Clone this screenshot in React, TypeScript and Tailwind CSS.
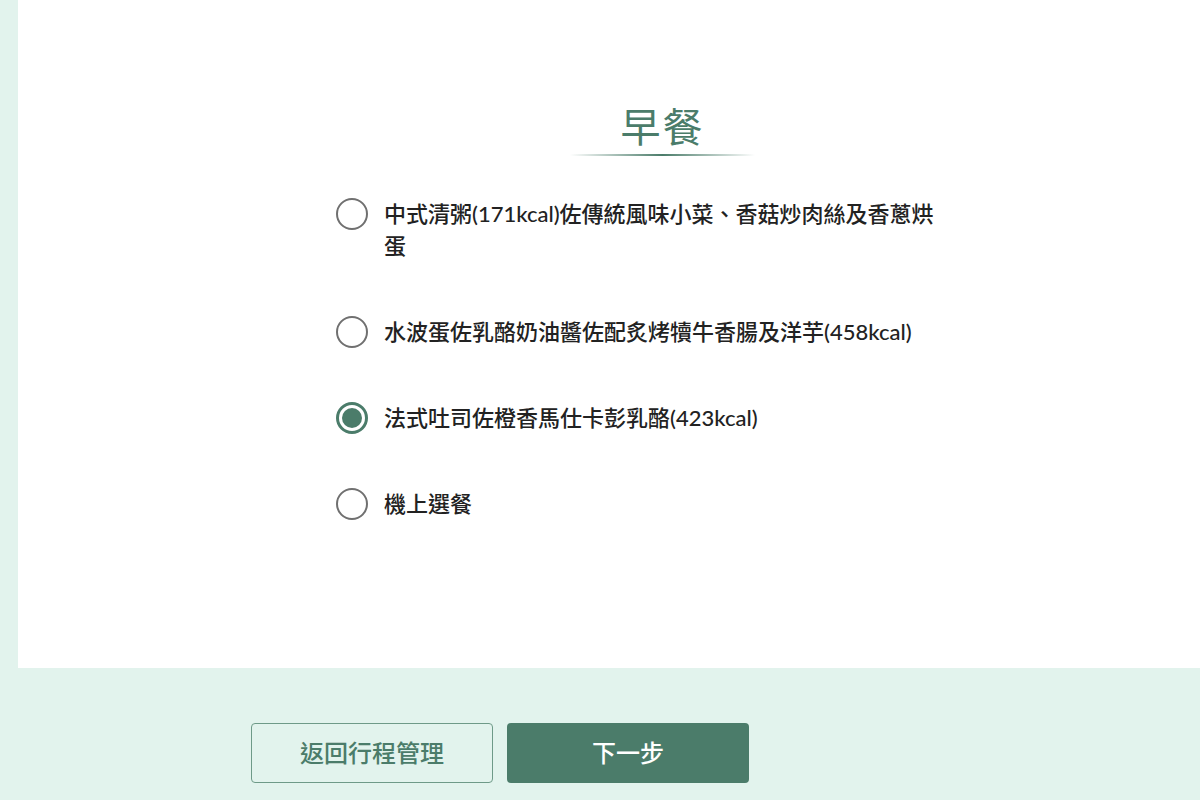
import React, { useState } from "react";

const options = [
  "中式清粥(171kcal)佐傳統風味小菜、香菇炒肉絲及香蔥烘蛋",
  "水波蛋佐乳酪奶油醬佐配炙烤犢牛香腸及洋芋(458kcal)",
  "法式吐司佐橙香馬仕卡彭乳酪(423kcal)",
  "機上選餐",
];

export default function App() {
  const [sel, setSel] = useState(2);
  return (
    <div
      className="w-[1200px] h-[800px] overflow-hidden bg-[#e2f3ed] flex flex-col"
      style={{ fontFamily: '"Noto Sans", "Noto Sans CJK TC", sans-serif' }}
    >
      <div className="ml-[18px] h-[668px] bg-white flex flex-col pt-[99px]">
        <div className="ml-[552px] w-[185px] flex flex-col items-center">
          <div className="text-[40px] leading-[56px] text-[#4b7c6a] tracking-[2px] font-normal">早餐</div>
          <div className="mt-[-1px] w-[185px] h-[2px] bg-gradient-to-r from-transparent via-[#4b7c6a] to-transparent" />
        </div>
        <div className="ml-[318px] mt-[42px] flex flex-col gap-[54px]">
          {options.map((o, i) => (
            <label
              key={i}
              className="flex items-start gap-[16px] cursor-pointer"
              onClick={() => setSel(i)}
            >
              {sel === i ? (
                <span className="w-[32px] h-[32px] shrink-0 rounded-full border-[3px] border-[#4b7c6a] flex items-center justify-center">
                  <span className="w-[20px] h-[20px] rounded-full bg-[#4b7c6a]" />
                </span>
              ) : (
                <span className="w-[32px] h-[32px] shrink-0 rounded-full border-2 border-[#707070] bg-white" />
              )}
              <span
                className="w-[556px] text-[22px] leading-[32px] font-medium text-[#222222]"
                style={{ fontFamily: 'Lato, "Noto Sans CJK TC", sans-serif' }}
              >
                {o}
              </span>
            </label>
          ))}
        </div>
      </div>
      <div className="mt-[55px] ml-[251px] flex gap-[14px]">
        <button className="w-[242px] h-[60px] rounded-[4px] border border-[#6e9a88] text-[#4b7c6a] text-[24px] font-medium">
          返回行程管理
        </button>
        <button className="w-[242px] h-[60px] rounded-[4px] bg-[#4b7c6a] text-white text-[24px] font-medium">
          下一步
        </button>
      </div>
    </div>
  );
}
